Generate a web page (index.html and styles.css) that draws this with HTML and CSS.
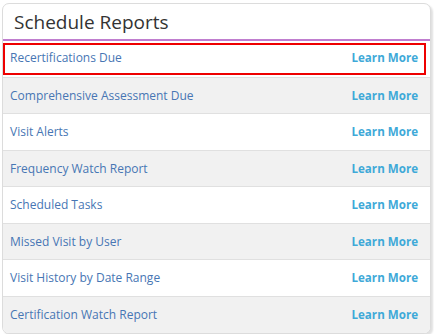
FILE: index.html
```html
<!doctype html>
<html lang="en">
<head>
    <meta charset="utf-8" />
    <meta name="viewport" content="width=device-width, initial-scale=1.0">
    <title>Schedule Reports</title>
    <link rel="stylesheet" href="styles.css">
</head>
<body>
    <div class="card">
        <div class="card-header">
            <h2 class="card-title">Schedule Reports</h2>
        </div>
        <ul class="report-list">
            <li class="report-row selected">
                <div class="report-inner"><span class="report-name">Recertifications Due</span><a class="learn-more" href="#">Learn More</a></div>
            </li>
            <li class="report-row">
                <div class="report-inner"><span class="report-name">Comprehensive Assessment Due</span><a class="learn-more" href="#">Learn More</a></div>
            </li>
            <li class="report-row">
                <div class="report-inner"><span class="report-name">Visit Alerts</span><a class="learn-more" href="#">Learn More</a></div>
            </li>
            <li class="report-row">
                <div class="report-inner"><span class="report-name">Frequency Watch Report</span><a class="learn-more" href="#">Learn More</a></div>
            </li>
            <li class="report-row">
                <div class="report-inner"><span class="report-name">Scheduled Tasks</span><a class="learn-more" href="#">Learn More</a></div>
            </li>
            <li class="report-row">
                <div class="report-inner"><span class="report-name">Missed Visit by User</span><a class="learn-more" href="#">Learn More</a></div>
            </li>
            <li class="report-row">
                <div class="report-inner"><span class="report-name">Visit History by Date Range</span><a class="learn-more" href="#">Learn More</a></div>
            </li>
            <li class="report-row">
                <div class="report-inner"><span class="report-name">Certification Watch Report</span><a class="learn-more" href="#">Learn More</a></div>
            </li>
        </ul>
    </div>
</body>
</html>
```
FILE: styles.css
```css
body {
    margin: 0;
    padding: 3px 3px 0 2px;
    background-color: #ffffff;
    font-family: "Open Sans", "Liberation Sans", sans-serif;
}

.card {
    border: 1px solid #dcdcdc;
    border-radius: 7px;
    background-color: #ffffff;
    box-shadow: 2px 2px 2px rgba(0, 0, 0, 0.12);
    overflow: hidden;
}

.card-header {
    height: 35px;
    border-bottom: 2px solid #c07dcf;
    display: flex;
    align-items: center;
    padding-left: 11px;
}

.card-title {
    margin: 0;
    font-size: 19px;
    font-weight: normal;
    color: #333333;
}

.report-list {
    list-style: none;
    margin: 0;
    padding: 0;
}

.report-row {
    height: 36.5px;
    box-sizing: border-box;
    border-bottom: 1px solid #e0e0e0;
    padding: 2px 4px 2px 0;
}

.report-row:nth-child(even) {
    background-color: #f1f1f1;
}

.report-row:last-child {
    border-bottom: none;
}

.report-inner {
    height: 100%;
    box-sizing: border-box;
    border: 2px solid transparent;
    display: flex;
    align-items: center;
    justify-content: space-between;
    padding: 0 6px 0 5px;
}

.selected .report-inner {
    border-color: #ee0000;
    padding-bottom: 3px;
}

.report-name {
    font-size: 12px;
    color: #4776b4;
}

.learn-more {
    font-size: 11.6px;
    font-weight: bold;
    color: #3ea9d8;
    text-decoration: none;
}
```
